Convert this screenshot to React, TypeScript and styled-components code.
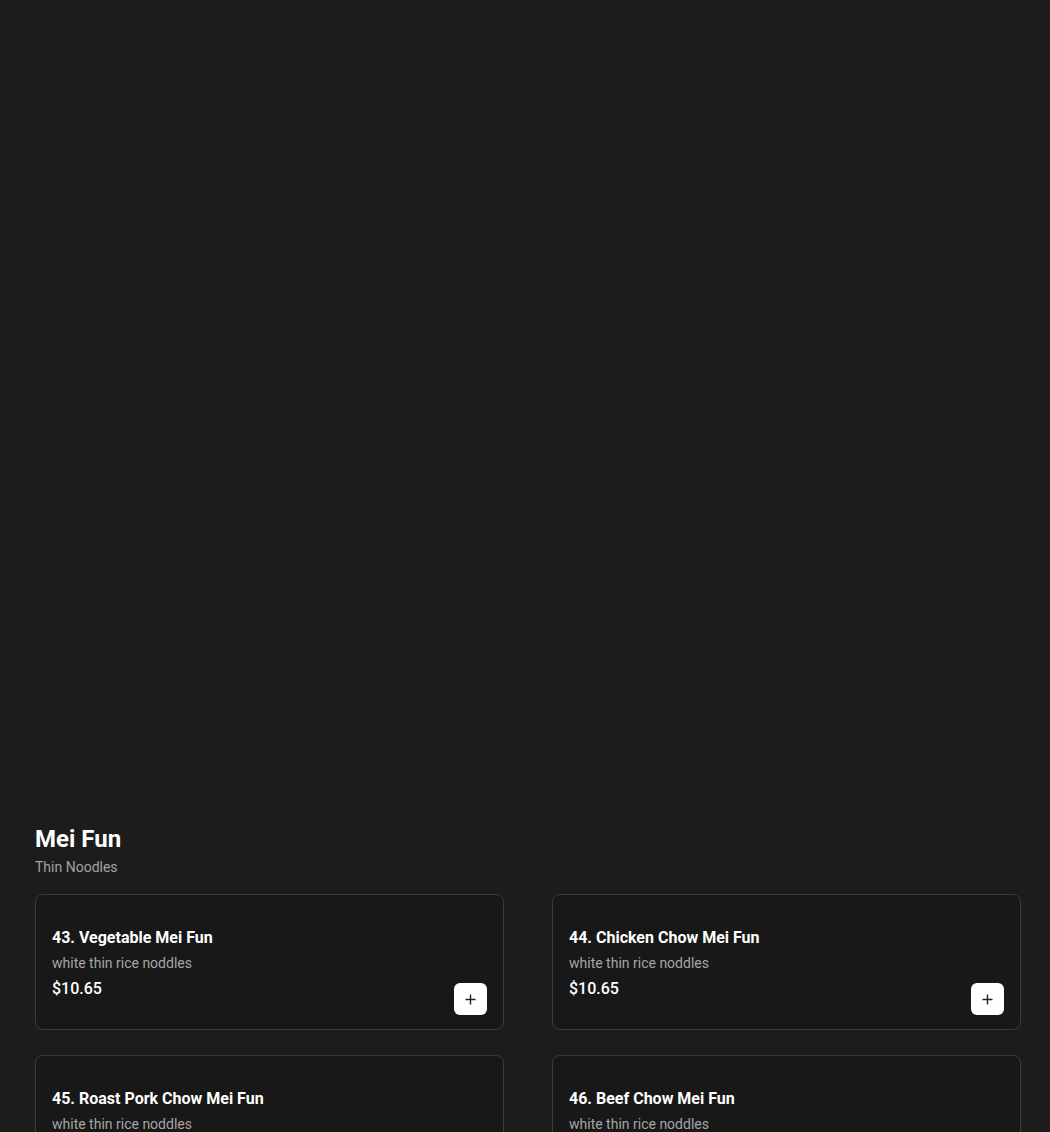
import React from 'react';
import styled, { createGlobalStyle } from 'styled-components';

const GlobalStyle = createGlobalStyle`
    html, body {
        margin: 0;
        padding: 0;
        background: #1c1c1c;
        font-family: Roboto, "Liberation Sans", Arial, sans-serif;
        color: #ffffff;
    }
    * {
        box-sizing: border-box;
    }
`;

const Page = styled.div`
    min-height: 1132px;
    background: #1c1c1c;
`;

const Banner = styled.div`
    height: 791px;
`;

const Section = styled.section`
    padding: 32px 29px 40px 35px;
`;

const Heading = styled.h2`
    margin: 0;
    font-size: 24px;
    line-height: 32px;
    font-weight: 700;
    color: #ffffff;
`;

const Subheading = styled.p`
    margin: 2px 0 17px;
    font-size: 14px;
    line-height: 20px;
    color: #a3a3a3;
`;

const Grid = styled.div`
    display: grid;
    grid-template-columns: 1fr 1fr;
    column-gap: 48px;
    row-gap: 25px;
`;

const Card = styled.div`
    display: flex;
    justify-content: space-between;
    min-height: 136px;
    padding: 31px 16px 14px 16px;
    background: #181818;
    border: 1px solid #3a3a3a;
    border-radius: 8px;
`;

const Info = styled.div`
    display: flex;
    flex-direction: column;
`;

const Title = styled.h3`
    margin: 0;
    font-size: 16px;
    line-height: 24px;
    font-weight: 700;
    color: #ffffff;
`;

const Description = styled.p`
    margin: 3px 0 0;
    font-size: 14px;
    line-height: 20px;
    color: #a6a6a6;
`;

const Price = styled.span`
    margin-top: 4px;
    font-size: 16px;
    line-height: 24px;
    font-weight: 500;
    color: #ffffff;
`;

const AddButton = styled.button`
    align-self: flex-end;
    display: flex;
    align-items: center;
    justify-content: center;
    width: 33px;
    height: 32px;
    padding: 0;
    border: none;
    border-radius: 6px;
    background: #ffffff;
    color: #222222;
    cursor: pointer;
`;

interface Item {
    name: string;
    description: string;
    price: string;
}

const items: Item[] = [
    { name: '43. Vegetable Mei Fun', description: 'white thin rice noddles', price: '$10.65' },
    { name: '44. Chicken Chow Mei Fun', description: 'white thin rice noddles', price: '$10.65' },
    { name: '45. Roast Pork Chow Mei Fun', description: 'white thin rice noddles', price: '$10.65' },
    { name: '46. Beef Chow Mei Fun', description: 'white thin rice noddles', price: '$10.65' },
];

const PlusIcon = () => (
    <svg width="11" height="11" viewBox="0 0 11 11" fill="none">
        <path d="M5.5 0.5v10M0.5 5.5h10" stroke="currentColor" strokeWidth="1.4" />
    </svg>
);

const MenuCard: React.FunctionComponent<{ item: Item }> = ({ item }) => (
    <Card>
        <Info>
            <Title>{item.name}</Title>
            <Description>{item.description}</Description>
            <Price>{item.price}</Price>
        </Info>
        <AddButton aria-label={`Add ${item.name}`}>
            <PlusIcon />
        </AddButton>
    </Card>
);

const App = () => (
    <Page>
        <GlobalStyle />
        <Banner />
        <Section>
            <Heading>Mei Fun</Heading>
            <Subheading>Thin Noodles</Subheading>
            <Grid>
                {items.map((item) => (
                    <MenuCard key={item.name} item={item} />
                ))}
            </Grid>
        </Section>
    </Page>
);

export default App;
